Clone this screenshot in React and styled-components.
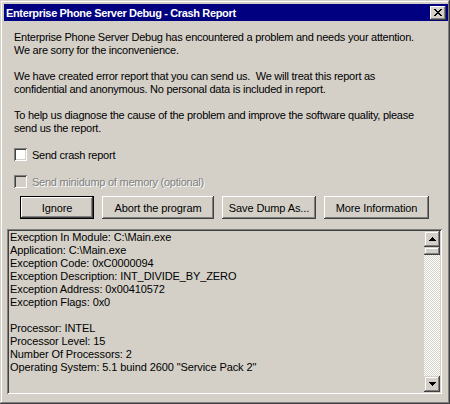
import React from "react";
import styled, { createGlobalStyle } from "styled-components";

const FACE = "#d4d0c8";

const GlobalStyle = createGlobalStyle`
  html, body {
    margin: 0;
    padding: 0;
    background: ${FACE};
  }
  body {
    font-family: "Liberation Sans", Arial, sans-serif;
    font-size: 11px;
    color: #000;
  }
`;

const raised = `
  box-shadow: inset -1px -1px #404040, inset 1px 1px #fff,
    inset -2px -2px #808080, inset 2px 2px ${FACE};
`;

const sunken = `
  box-shadow: inset 1px 1px #808080, inset -1px -1px #fff,
    inset 2px 2px #404040, inset -2px -2px ${FACE};
`;

const Window = styled.div`
  width: 450px;
  height: 404px;
  box-sizing: border-box;
  padding: 4px 2px 2px 4px;
  background: ${FACE};
  box-shadow: inset -1px -1px #404040, inset 1px 1px ${FACE},
    inset -2px -2px #808080, inset 2px 2px #fff;
  display: flex;
  flex-direction: column;
  overflow: hidden;
`;

const TitleBar = styled.div`
  height: 17px;
  flex: none;
  background: #000080;
  display: flex;
  align-items: center;
  justify-content: space-between;
  padding: 0 2px;
`;

const Title = styled.span`
  color: #fff;
  font-weight: bold;
  font-size: 11px;
  letter-spacing: -0.35px;
  white-space: nowrap;
`;

const CloseButton = styled.button`
  width: 16px;
  height: 14px;
  padding: 0;
  border: none;
  background: ${FACE};
  ${raised}
  display: flex;
  align-items: center;
  justify-content: center;
`;

const Body = styled.div`
  flex: 1;
  display: flex;
  flex-direction: column;
  padding: 10px 6px 8px 3px;
  min-height: 0;
  letter-spacing: -0.25px;
`;

const Message = styled.div`
  padding-left: 7px;
  line-height: 13px;
`;

const Para = styled.p`
  margin: 0 0 13px;
`;

const CheckRow = styled.label`
  display: flex;
  align-items: center;
  gap: 5px;
  height: 13px;
  padding-left: 7px;
  margin-bottom: ${(p) => p.$gap || 0}px;
  color: ${(p) => (p.$disabled ? "#808080" : "#000")};
  text-shadow: ${(p) => (p.$disabled ? "1px 1px 0 #fff" : "none")};
`;

const Box = styled.span`
  width: 13px;
  height: 13px;
  flex: none;
  box-sizing: border-box;
  background: ${(p) => (p.$disabled ? FACE : "#fff")};
  ${sunken}
`;

const ButtonRow = styled.div`
  display: flex;
  gap: 8px;
  padding-left: 13px;
  margin: 8px 0 10px;
`;

const Button = styled.button`
  width: ${(p) => p.$w}px;
  height: 23px;
  box-sizing: border-box;
  padding: 0;
  font-family: inherit;
  font-size: 11px;
  letter-spacing: -0.1px;
  color: #000;
  background: ${FACE};
  border: ${(p) => (p.$default ? "1px solid #000" : "none")};
  ${raised}
`;

const Report = styled.div`
  flex: 1;
  display: flex;
  padding: 2px;
  box-sizing: border-box;
  background: ${FACE};
  ${sunken}
  min-height: 0;
`;

const ReportText = styled.div`
  flex: 1;
  padding: 0 1px;
  line-height: 13px;
  letter-spacing: -0.1px;
  white-space: pre;
  overflow: hidden;
`;

const ScrollBar = styled.div`
  width: 16px;
  flex: none;
  display: flex;
  flex-direction: column;
`;

const ScrollButton = styled.div`
  height: ${(p) => p.$h}px;
  flex: none;
  background: ${FACE};
  box-shadow: inset -1px -1px #404040, inset 1px 1px ${FACE},
    inset -2px -2px #808080, inset 2px 2px #fff;
  display: flex;
  align-items: center;
  justify-content: center;
`;

const Track = styled.div`
  flex: 1;
  background-color: #fff;
  background-image: repeating-conic-gradient(${FACE} 0 25%, #fff 0 50%);
  background-size: 2px 2px;
`;

const Glyph = ({ rows }) => (
  <svg
    width={rows[0].length}
    height={rows.length}
    shapeRendering="crispEdges"
    style={{ display: "block" }}
  >
    {rows.flatMap((row, y) =>
      row.split("").map((c, x) =>
        c === "#" ? <rect key={`${x}-${y}`} x={x} y={y} width={1} height={1} fill="#000" /> : null
      )
    )}
  </svg>
);

const CLOSE = [
  "##....##",
  ".##..##.",
  "..####..",
  "...##...",
  "..####..",
  ".##..##.",
  "##....##",
];

const UP = ["...#...", "..###..", ".#####.", "#######"];
const DOWN = [...UP].reverse();

const reportLines = [
  "Execption In Module: C:\\Main.exe",
  "Application: C:\\Main.exe",
  "Exception Code: 0xC0000094",
  "Exception Description: INT_DIVIDE_BY_ZERO",
  "Exception Address: 0x00410572",
  "Exception Flags: 0x0",
  "",
  "Processor: INTEL",
  "Processor Level: 15",
  "Number Of Processors: 2",
  'Operating System: 5.1 buind 2600 "Service Pack 2"',
];

export default function App() {
  return (
    <>
      <GlobalStyle />
      <Window>
        <TitleBar>
          <Title>Enterprise Phone Server Debug - Crash Report</Title>
          <CloseButton aria-label="Close">
            <Glyph rows={CLOSE} />
          </CloseButton>
        </TitleBar>
        <Body>
          <Message>
            <Para>
              Enterprise Phone Server Debug has encountered a problem and needs your attention.
              <br />
              We are sorry for the inconvenience.
            </Para>
            <Para>
              We have created error report that you can send us.&nbsp; We will treat this report as
              <br />
              confidential and anonymous. No personal data is included in report.
            </Para>
            <Para>
              To help us diagnose the cause of the problem and improve the software quality, please
              <br />
              send us the report.
            </Para>
          </Message>
          <CheckRow $gap={14}>
            <Box />
            Send crash report
          </CheckRow>
          <CheckRow $disabled>
            <Box $disabled />
            Send minidump of memory (optional)
          </CheckRow>
          <ButtonRow>
            <Button $default $w={74}>Ignore</Button>
            <Button $w={112}>Abort the program</Button>
            <Button $w={94}>Save Dump As...</Button>
            <Button $w={105}>More Information</Button>
          </ButtonRow>
          <Report>
            <ReportText>
              {reportLines.map((line, i) => (
                <div key={i}>{line || "\u00a0"}</div>
              ))}
            </ReportText>
            <ScrollBar>
              <ScrollButton $h={16}>
                <Glyph rows={UP} />
              </ScrollButton>
              <ScrollButton $h={8} />
              <Track />
              <ScrollButton $h={16}>
                <Glyph rows={DOWN} />
              </ScrollButton>
            </ScrollBar>
          </Report>
        </Body>
      </Window>
    </>
  );
}
